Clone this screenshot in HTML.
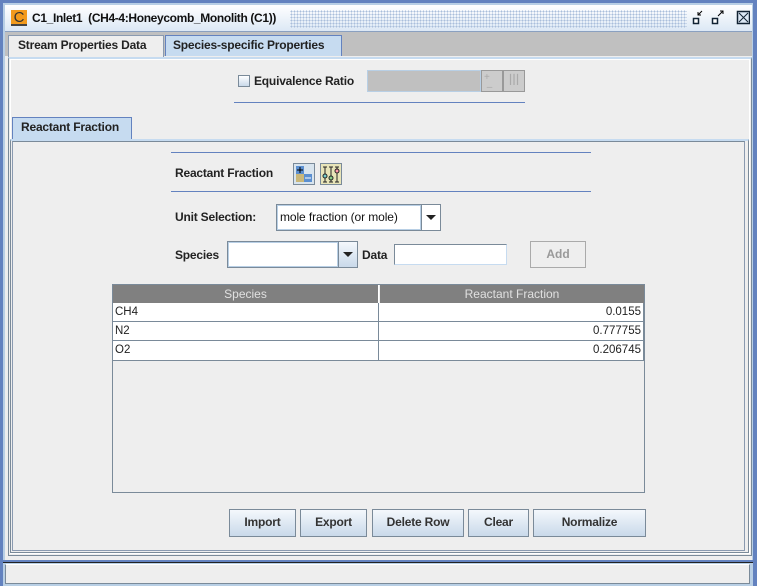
<!DOCTYPE html>
<html><head><style>
*{margin:0;padding:0;box-sizing:border-box}
body{width:757px;height:586px;overflow:hidden;background:#eeeeee;font-family:"Liberation Sans",Arial,sans-serif;font-size:12px;position:relative}
.a{position:absolute}
.b{font-weight:bold;color:#333;letter-spacing:-0.2px}
.btn{position:absolute;border:1px solid #7a8a99;background:linear-gradient(#f4f8fc,#c9d9ea);font-weight:bold;color:#333;text-align:center;line-height:25px;font-size:12px;letter-spacing:-0.2px}
.hl{position:absolute;height:1px;background:#6382bf}
.cell{position:absolute;height:19px;border-right:1px solid #7a8a99;border-bottom:1px solid #7a8a99;background:#fff;font-size:11.5px;line-height:18px;color:#222;padding:0 2px}
</style></head><body>
<div class="a" style="left:0;top:0;width:757px;height:586px;background:#6382bf"></div>
<div class="a" style="left:3px;top:3px;width:750px;height:583px;background:#b8cfe5"></div>
<div class="a" style="left:5px;top:5px;width:747px;height:556px;background:#eeeeee"></div>
<div class="a" style="left:5px;top:5px;width:747px;height:27px;background:linear-gradient(#fff,#dce8f5);border-bottom:1px solid #8aa0c0"></div>
<div class="a" style="left:290px;top:10px;width:397px;height:18px;background-image:radial-gradient(#a9bedb 0.8px,transparent 1px);background-size:3px 3px"></div>
<div class="a" style="left:11px;top:10px;width:16px;height:16px;background:#f29a1d;border-bottom:2px solid #444;color:#333;font-size:15px;line-height:15px;text-align:center">C</div>
<div class="a b" style="left:32px;top:11px;color:#111;letter-spacing:-0.35px">C1_Inlet1&nbsp; (CH4-4:Honeycomb_Monolith (C1))</div>
<svg class="a" style="left:690px;top:8px" width="60" height="20">
<rect x="3.5" y="10.5" width="5" height="5" fill="#fff" stroke="#123" stroke-width="1.5"/><path d="M12 3 L8 7 M8 4 V7 H11" stroke="#000" fill="none"/>
<rect x="22.5" y="10.5" width="5" height="5" fill="#fff" stroke="#123" stroke-width="1.5"/><path d="M28 8 L33 3 M30 3 H33 V6" stroke="#000" fill="none"/>
<rect x="47.5" y="3.5" width="12" height="12" fill="#dce8f5" stroke="#123" stroke-width="1.5"/><path d="M49 5 L58 14 M58 5 L49 14" stroke="#123"/>
</svg>
<div class="a" style="left:5px;top:32px;width:747px;height:24px;background:#c0c0c0"></div>
<div class="a b" style="left:8px;top:35px;width:156px;height:22px;background:#eeeeee;border:1px solid #8a9ab0;border-bottom:none;padding:2px 0 0 9px;color:#222">Stream Properties Data</div>
<div class="a b" style="left:165px;top:35px;width:177px;height:21px;background:#c6dbf0;border:1px solid #6382bf;border-bottom:none;padding:2px 0 0 7px;color:#222">Species-specific Properties</div>
<div class="a" style="left:8px;top:57px;width:744px;height:499px;border:1px solid #7a8a99;border-top:2px solid #c6dbf0;background:#eeeeee"></div>
<div class="a" style="left:10px;top:59px;width:740px;height:495px;border:1px solid #fff"></div>
<div class="a" style="left:238px;top:75px;width:12px;height:12px;border:1px solid #7a8a99;background:linear-gradient(#fff,#c9d9ea)"></div>
<div class="a b" style="left:254px;top:74px;color:#222">Equivalence Ratio</div>
<div class="a" style="left:367px;top:70px;width:114px;height:22px;background:#c0c0c0;border:1px solid #b8cfe5"></div>
<div class="a" style="left:481px;top:70px;width:22px;height:22px;border:1px solid #999;background:#ccc;color:#aaa;font-size:10px;line-height:10px;padding:2px">+<br>&nbsp;–</div>
<div class="a" style="left:503px;top:70px;width:22px;height:22px;border:1px solid #999;background:#ccc;color:#aaa;font-size:12px;text-align:center;line-height:20px">ꟾꟾꟾ</div>
<div class="hl" style="left:234px;top:102px;width:291px"></div>
<div class="a b" style="left:12px;top:117px;width:120px;height:23px;background:#c6dbf0;border:1px solid #6382bf;border-bottom:none;padding:2px 0 0 8px;color:#222">Reactant Fraction</div>
<div class="a" style="left:10px;top:139px;width:739px;height:414px;border:1px solid #7a8a99;border-top:2px solid #c6dbf0"></div>
<div class="a" style="left:12px;top:141px;width:733px;height:410px;border:1px solid #8a9ab0;border-top:1px solid #7a8a99"></div>
<div class="hl" style="left:171px;top:152px;width:420px"></div>
<div class="hl" style="left:171px;top:191px;width:420px"></div>
<div class="a b" style="left:175px;top:166px;color:#222">Reactant Fraction</div>
<svg class="a" style="left:293px;top:163px" width="50" height="22">
<rect x="0.5" y="0.5" width="21" height="21" fill="#d8e4ee" stroke="#7a8a99"/>
<rect x="3" y="3" width="8" height="8" fill="#5b8fd0"/><rect x="11" y="11" width="8" height="8" fill="#5b8fd0"/><rect x="3" y="11" width="8" height="8" fill="#c9b77a"/>
<path d="M7 4v6M4 7h6" stroke="#000"/><path d="M12 15h6" stroke="#fff"/>
<rect x="27.5" y="0.5" width="21" height="21" fill="#e8e4b8" stroke="#7a8a99"/>
<path d="M32 4v15M38 4v15M44 4v15M30 4h4M30 19h4M36 4h4M36 19h4M42 4h4M42 19h4" stroke="#222"/>
<circle cx="32" cy="13" r="2" fill="#7cc" stroke="#222"/><circle cx="38" cy="15" r="2" fill="#8c8" stroke="#222"/><circle cx="44" cy="8" r="2" fill="#f9a" stroke="#222"/>
</svg>
<div class="a b" style="left:175px;top:210px;color:#222">Unit Selection:</div>
<div class="a" style="left:276px;top:204px;width:165px;height:27px;border:1px solid #7a8a99;background:#fff"></div>
<div class="a" style="left:277px;top:205px;width:144px;height:25px;border:1px solid #b8cfe5;padding:4px 0 0 2px;color:#111;letter-spacing:-0.1px">mole fraction (or mole)</div>
<div class="a" style="left:421px;top:205px;width:19px;height:25px;border-left:1px solid #7a8a99;background:#fff"><div style="margin:10px 0 0 4px;width:0;height:0;border-left:5px solid transparent;border-right:5px solid transparent;border-top:5px solid #222"></div></div>
<div class="a b" style="left:175px;top:248px;color:#222">Species</div>
<div class="a" style="left:227px;top:241px;width:131px;height:27px;border:1px solid #7a8a99;background:#fff"></div>
<div class="a" style="left:228px;top:242px;width:110px;height:25px;border:1px solid #b8cfe5"></div>
<div class="a" style="left:338px;top:242px;width:19px;height:25px;border-left:1px solid #7a8a99;background:linear-gradient(#f4f8fc,#c9d9ea)"><div style="margin:10px 0 0 4px;width:0;height:0;border-left:5px solid transparent;border-right:5px solid transparent;border-top:5px solid #222"></div></div>
<div class="a b" style="left:362px;top:248px;color:#222">Data</div>
<div class="a" style="left:394px;top:244px;width:113px;height:21px;border:1px solid #7a8a99;border-right-color:#c6dbf0;border-bottom-color:#c6dbf0;background:#fff"></div>
<div class="a" style="left:530px;top:241px;width:56px;height:27px;border:1px solid #aaa;color:#999;font-weight:bold;text-align:center;line-height:25px">Add</div>
<div class="a" style="left:112px;top:284px;width:533px;height:209px;border:1px solid #7a8a99;background:#eeeeee"></div>
<div class="a" style="left:113px;top:285px;width:266px;height:18px;background:#808080;border-right:1px solid #fff;color:#e0e0e0;font-size:12px;text-align:center;line-height:18px">Species</div>
<div class="a" style="left:380px;top:285px;width:264px;height:18px;background:#808080;color:#e0e0e0;font-size:12px;text-align:center;line-height:18px">Reactant Fraction</div>
<div class="cell" style="left:113px;top:303px;width:266px">CH4</div>
<div class="cell" style="left:379px;top:303px;width:265px;text-align:right">0.0155</div>
<div class="cell" style="left:113px;top:322px;width:266px">N2</div>
<div class="cell" style="left:379px;top:322px;width:265px;text-align:right">0.777755</div>
<div class="cell" style="left:113px;top:341px;width:266px;height:20px">O2</div>
<div class="cell" style="left:379px;top:341px;width:265px;height:20px;text-align:right">0.206745</div>
<div class="btn" style="left:229px;top:509px;width:67px;height:28px">Import</div>
<div class="btn" style="left:300px;top:509px;width:67px;height:28px">Export</div>
<div class="btn" style="left:372px;top:509px;width:92px;height:28px">Delete Row</div>
<div class="btn" style="left:468px;top:509px;width:61px;height:28px">Clear</div>
<div class="btn" style="left:533px;top:509px;width:113px;height:28px">Normalize</div>
<div class="a" style="left:3px;top:560px;width:750px;height:2px;background:#6382bf"></div>
<div class="a" style="left:3px;top:562px;width:750px;height:1px;background:#222"></div>
<div class="a" style="left:3px;top:563px;width:750px;height:23px;background:#b8cfe5"></div>
<div class="a" style="left:5px;top:564px;width:745px;height:20px;background:#eeeeee;border:1px solid #7a8a99;border-top-color:#fff"></div>
</body></html>
